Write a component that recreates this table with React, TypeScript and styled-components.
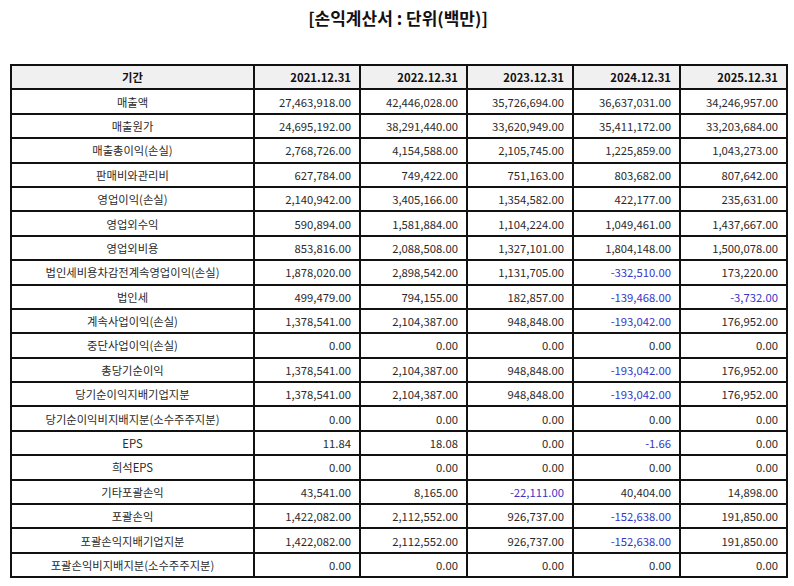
import React from 'react';
import styled, { createGlobalStyle } from 'styled-components';

const GlobalStyle = createGlobalStyle`
  body {
    margin: 0;
    background: #fff;
    font-family: "Noto Sans CJK KR", "Noto Sans", sans-serif;
  }
`;

const Page = styled.div`
  padding: 6px 8px 0 10px;
`;

const Title = styled.h2`
  margin: 0 0 34px;
  text-align: center;
  font-size: 17px;
  font-weight: 700;
  color: #111;
  line-height: 24px;
`;

const Table = styled.table`
  width: 776px;
  border-collapse: collapse;
  table-layout: fixed;
  font-size: 11.3px;
  color: #2a2a2a;
`;

const Col = styled.col<{ $w: number }>`
  width: ${(p) => p.$w}px;
`;

const HeadCell = styled.th<{ $first?: boolean }>`
  background: #f0f0f0;
  border: 2px solid #111;
  height: 22.4px;
  padding: 0 8px;
  font-weight: 700;
  color: #111;
  text-align: ${(p) => (p.$first ? 'center' : 'right')};
`;

const LabelCell = styled.td`
  border: 2px solid #111;
  height: 22.4px;
  padding: 0 4px;
  text-align: center;
  white-space: nowrap;
`;

const NumCell = styled.td<{ $neg?: boolean }>`
  border: 2px solid #111;
  height: 22.4px;
  padding: 0 8px;
  text-align: right;
  color: ${(p) => (p.$neg ? '#3535c8' : '#2a2a2a')};
`;

const periods = ['2021.12.31', '2022.12.31', '2023.12.31', '2024.12.31', '2025.12.31'];

const rows: [string, string[]][] = [
  ['매출액', ['27,463,918.00', '42,446,028.00', '35,726,694.00', '36,637,031.00', '34,246,957.00']],
  ['매출원가', ['24,695,192.00', '38,291,440.00', '33,620,949.00', '35,411,172.00', '33,203,684.00']],
  ['매출총이익(손실)', ['2,768,726.00', '4,154,588.00', '2,105,745.00', '1,225,859.00', '1,043,273.00']],
  ['판매비와관리비', ['627,784.00', '749,422.00', '751,163.00', '803,682.00', '807,642.00']],
  ['영업이익(손실)', ['2,140,942.00', '3,405,166.00', '1,354,582.00', '422,177.00', '235,631.00']],
  ['영업외수익', ['590,894.00', '1,581,884.00', '1,104,224.00', '1,049,461.00', '1,437,667.00']],
  ['영업외비용', ['853,816.00', '2,088,508.00', '1,327,101.00', '1,804,148.00', '1,500,078.00']],
  ['법인세비용차감전계속영업이익(손실)', ['1,878,020.00', '2,898,542.00', '1,131,705.00', '-332,510.00', '173,220.00']],
  ['법인세', ['499,479.00', '794,155.00', '182,857.00', '-139,468.00', '-3,732.00']],
  ['계속사업이익(손실)', ['1,378,541.00', '2,104,387.00', '948,848.00', '-193,042.00', '176,952.00']],
  ['중단사업이익(손실)', ['0.00', '0.00', '0.00', '0.00', '0.00']],
  ['총당기순이익', ['1,378,541.00', '2,104,387.00', '948,848.00', '-193,042.00', '176,952.00']],
  ['당기순이익지배기업지분', ['1,378,541.00', '2,104,387.00', '948,848.00', '-193,042.00', '176,952.00']],
  ['당기순이익비지배지분(소수주주지분)', ['0.00', '0.00', '0.00', '0.00', '0.00']],
  ['EPS', ['11.84', '18.08', '0.00', '-1.66', '0.00']],
  ['희석EPS', ['0.00', '0.00', '0.00', '0.00', '0.00']],
  ['기타포괄손익', ['43,541.00', '8,165.00', '-22,111.00', '40,404.00', '14,898.00']],
  ['포괄손익', ['1,422,082.00', '2,112,552.00', '926,737.00', '-152,638.00', '191,850.00']],
  ['포괄손익지배기업지분', ['1,422,082.00', '2,112,552.00', '926,737.00', '-152,638.00', '191,850.00']],
  ['포괄손익비지배지분(소수주주지분)', ['0.00', '0.00', '0.00', '0.00', '0.00']],
];

const colWidths = [243, 106, 107, 106, 107, 107];

export default function App() {
  return (
    <Page>
      <GlobalStyle />
      <Title>[손익계산서 : 단위(백만)]</Title>
      <Table>
        <colgroup>
          {colWidths.map((w, i) => (
            <Col key={i} $w={w} />
          ))}
        </colgroup>
        <thead>
          <tr>
            <HeadCell $first>기간</HeadCell>
            {periods.map((p) => (
              <HeadCell key={p}>{p}</HeadCell>
            ))}
          </tr>
        </thead>
        <tbody>
          {rows.map(([label, values]) => (
            <tr key={label}>
              <LabelCell>{label}</LabelCell>
              {values.map((v, i) => (
                <NumCell key={i} $neg={v.startsWith('-')}>
                  {v}
                </NumCell>
              ))}
            </tr>
          ))}
        </tbody>
      </Table>
    </Page>
  );
}
